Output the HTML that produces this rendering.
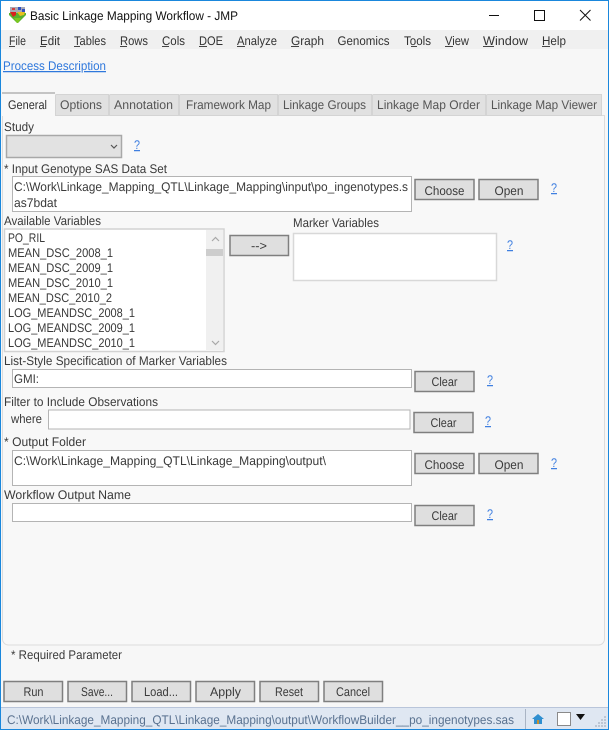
<!DOCTYPE html>
<html><head><meta charset="utf-8"><title>Basic Linkage Mapping Workflow - JMP</title>
<style>
html,body{margin:0;padding:0;background:#f7f7f7;width:609px;height:730px;overflow:hidden}
svg{display:block;position:absolute;left:0;top:0}
text{font-family:"Liberation Sans",sans-serif;font-size:12.5px;fill:#3a3a3a;white-space:pre;text-rendering:geometricPrecision}
.t{fill:#111}
.m{fill:#333}
.tab{fill:#555}
.q{fill:#3f7fe0;text-decoration:underline}
.l{fill:#2f78dc;text-decoration:underline}
.c{text-anchor:middle}
.b{fill:#dfdfdf;stroke:#7f7f7f;stroke-width:1.5}
.i{fill:#fff;stroke:#b4b4b4;stroke-width:1}
.s{fill:#5a7290}
</style></head><body>
<svg width="609" height="730" viewBox="0 0 609 730" xmlns="http://www.w3.org/2000/svg">
<rect width="609" height="730" fill="#f7f7f7"/>
<rect x="0" y="0" width="609" height="30" fill="#fff"/>
<rect x="0" y="30" width="609" height="19" fill="#f0f0f0"/>

<!-- app icon -->
<rect x="10" y="7" width="15" height="6" fill="#a9a9b4"/>
<rect x="12" y="8" width="3" height="2" fill="#d04040"/><rect x="18" y="7" width="3" height="3" fill="#3050c0"/><rect x="22" y="9" width="3" height="3" fill="#3050c0"/>
<path d="M9 13h17v2l-8 8h-1l-8-8z" fill="#58b030"/>
<path d="M10 12h6v3l-3 2z" fill="#d82020"/>
<path d="M17 12h8l-1 3-4 1z" fill="#e8c020"/>
<path d="M14 18h7l-3 5h-1z" fill="#7cc820"/>

<text class="t" x="30" y="20" textLength="208" lengthAdjust="spacingAndGlyphs">Basic Linkage Mapping Workflow - JMP</text>

<!-- window buttons -->
<rect x="489" y="15" width="10" height="1" fill="#111"/>
<rect x="534.5" y="10.5" width="10" height="10" fill="none" stroke="#111"/>
<path d="M580 10L590.500 20.500M590.500 10L580 20.500" stroke="#111" fill="none"/>

<!-- menu -->
<g class="menu">
<text class="m" x="9" y="45" textLength="17" lengthAdjust="spacingAndGlyphs">File</text>
<text class="m" x="40" y="45" textLength="20" lengthAdjust="spacingAndGlyphs">Edit</text>
<text class="m" x="74" y="45" textLength="32" lengthAdjust="spacingAndGlyphs">Tables</text>
<text class="m" x="120" y="45" textLength="28" lengthAdjust="spacingAndGlyphs">Rows</text>
<text class="m" x="162" y="45" textLength="23" lengthAdjust="spacingAndGlyphs">Cols</text>
<text class="m" x="199" y="45" textLength="24" lengthAdjust="spacingAndGlyphs">DOE</text>
<text class="m" x="237" y="45" textLength="40" lengthAdjust="spacingAndGlyphs">Analyze</text>
<text class="m" x="291" y="45" textLength="33" lengthAdjust="spacingAndGlyphs">Graph</text>
<text class="m" x="337.500" y="45" textLength="52" lengthAdjust="spacingAndGlyphs">Genomics</text>
<text class="m" x="404" y="45" textLength="27" lengthAdjust="spacingAndGlyphs">Tools</text>
<text class="m" x="445" y="45" textLength="24" lengthAdjust="spacingAndGlyphs">View</text>
<text class="m" x="483" y="45" textLength="45" lengthAdjust="spacingAndGlyphs">Window</text>
<text class="m" x="542" y="45" textLength="24" lengthAdjust="spacingAndGlyphs">Help</text>
</g>
<g fill="#444">
<rect x="9" y="46" width="6" height="1"/><rect x="40" y="46" width="6" height="1"/><rect x="74" y="46" width="6" height="1"/><rect x="120" y="46" width="7" height="1"/><rect x="162" y="46" width="7" height="1"/><rect x="199" y="46" width="8" height="1"/><rect x="237" y="46" width="8" height="1"/><rect x="291" y="46" width="8" height="1"/><rect x="411" y="46" width="6" height="1"/><rect x="445" y="46" width="8" height="1"/><rect x="483" y="46" width="11" height="1"/><rect x="542" y="46" width="8" height="1"/>
</g>

<text class="l" x="3" y="70" textLength="103" lengthAdjust="spacingAndGlyphs">Process Description</text>

<!-- tab panel -->
<path d="M2.500 115.500H604.500V639a6 6 0 0 1-6 6H8.500a6 6 0 0 1-6-6z" fill="#f8f8f8" stroke="#dcdcdc"/>
<g fill="#e1e1e1" stroke="#d4d4d4">
<path d="M55.500 115.500V95.500q0-1 1-1H108.500V115.500z"/>
<path d="M109.500 115.500V95.500q0-1 1-1H178.500V115.500z"/>
<path d="M179.500 115.500V95.500q0-1 1-1H277.500V115.500z"/>
<path d="M278.500 115.500V95.500q0-1 1-1H371.500V115.500z"/>
<path d="M372.500 115.500V95.500q0-1 1-1H485.500V115.500z"/>
<path d="M486.500 115.500V95.500q0-1 1-1H601.500V115.500z"/>
</g>
<rect x="2" y="93" width="53" height="23" fill="#f8f8f8"/>
<rect x="2" y="92" width="53" height="2" fill="#c4c4c4"/>
<text x="8" y="109" textLength="39" lengthAdjust="spacingAndGlyphs" style="fill:#333">General</text>
<text class="tab" x="60" y="109" textLength="42" lengthAdjust="spacingAndGlyphs">Options</text>
<text class="tab" x="114" y="109" textLength="59" lengthAdjust="spacingAndGlyphs">Annotation</text>
<text class="tab" x="186" y="109" textLength="85" lengthAdjust="spacingAndGlyphs">Framework Map</text>
<text class="tab" x="283" y="109" textLength="83" lengthAdjust="spacingAndGlyphs">Linkage Groups</text>
<text class="tab" x="377" y="109" textLength="103" lengthAdjust="spacingAndGlyphs">Linkage Map Order</text>
<text class="tab" x="491" y="109" textLength="106" lengthAdjust="spacingAndGlyphs">Linkage Map Viewer</text>

<!-- Study -->
<text x="4" y="131" textLength="30" lengthAdjust="spacingAndGlyphs">Study</text>
<rect x="6.500" y="135.500" width="115" height="22" fill="#e2e2e2" stroke="#a8a8a8" stroke-width="1.500"/>
<path d="M111 145l3 3 3-3" fill="none" stroke="#555" stroke-width="1.200"/>
<text class="q" x="134" y="149" textLength="6" lengthAdjust="spacingAndGlyphs">?</text>

<!-- Input -->
<text x="4" y="173" textLength="163" lengthAdjust="spacingAndGlyphs">* Input Genotype SAS Data Set</text>
<rect class="i" x="12.500" y="176.500" width="399" height="35"/>
<text x="14" y="191" textLength="394" lengthAdjust="spacingAndGlyphs">C:\Work\Linkage_Mapping_QTL\Linkage_Mapping\input\po_ingenotypes.s</text>
<text x="14" y="207" textLength="43" lengthAdjust="spacingAndGlyphs">as7bdat</text>
<rect class="b" x="415" y="179.500" width="59" height="20"/>
<text class="c" x="444.500" y="195" textLength="40" lengthAdjust="spacingAndGlyphs">Choose</text>
<rect class="b" x="479" y="179.500" width="59" height="20"/>
<text class="c" x="509" y="195" textLength="29" lengthAdjust="spacingAndGlyphs">Open</text>
<text class="q" x="551" y="192" textLength="6" lengthAdjust="spacingAndGlyphs">?</text>

<!-- Available -->
<text x="4" y="225" textLength="97" lengthAdjust="spacingAndGlyphs">Available Variables</text>
<rect x="4.500" y="229" width="219.500" height="122.500" fill="#fff" stroke="#d2d2d2" stroke-width="1.500"/>
<rect x="206" y="230" width="17" height="120" fill="#f0f0f0"/>
<rect x="206" y="249" width="17" height="7" fill="#cdcdcd"/>
<path d="M212 241l3.500-3.500 3.500 3.500M212 341l3.500 3.500 3.500-3.500" fill="none" stroke="#a8a8a8" stroke-width="1.200"/>
<text x="8" y="242" textLength="37" lengthAdjust="spacingAndGlyphs">PO_RIL</text>
<text x="8" y="257" textLength="105" lengthAdjust="spacingAndGlyphs">MEAN_DSC_2008_1</text>
<text x="8" y="272" textLength="105" lengthAdjust="spacingAndGlyphs">MEAN_DSC_2009_1</text>
<text x="8" y="287" textLength="105" lengthAdjust="spacingAndGlyphs">MEAN_DSC_2010_1</text>
<text x="8" y="302" textLength="104" lengthAdjust="spacingAndGlyphs">MEAN_DSC_2010_2</text>
<text x="8" y="317" textLength="127" lengthAdjust="spacingAndGlyphs">LOG_MEANDSC_2008_1</text>
<text x="8" y="332" textLength="127" lengthAdjust="spacingAndGlyphs">LOG_MEANDSC_2009_1</text>
<text x="8" y="347" textLength="127" lengthAdjust="spacingAndGlyphs">LOG_MEANDSC_2010_1</text>

<rect class="b" x="230" y="235.500" width="58.500" height="20"/>
<text class="c" x="259" y="250" textLength="16" lengthAdjust="spacingAndGlyphs">--&gt;</text>

<text x="293" y="227" textLength="86" lengthAdjust="spacingAndGlyphs">Marker Variables</text>
<rect x="293.500" y="233.500" width="203" height="47" fill="#fff" stroke="#d8d8d8" stroke-width="1.500"/>
<text class="q" x="507" y="249" textLength="6" lengthAdjust="spacingAndGlyphs">?</text>

<!-- List style -->
<text x="4" y="365" textLength="223" lengthAdjust="spacingAndGlyphs">List-Style Specification of Marker Variables</text>
<rect class="i" x="12.500" y="369.500" width="399" height="18"/>
<text x="14" y="383" textLength="25" lengthAdjust="spacingAndGlyphs">GMI:</text>
<rect class="b" x="415" y="371.500" width="59" height="20"/>
<text class="c" x="444.500" y="386" textLength="26" lengthAdjust="spacingAndGlyphs">Clear</text>
<text class="q" x="487" y="384" textLength="6" lengthAdjust="spacingAndGlyphs">?</text>

<!-- Filter -->
<text x="4" y="406" textLength="154" lengthAdjust="spacingAndGlyphs">Filter to Include Observations</text>
<text x="11" y="423" textLength="31" lengthAdjust="spacingAndGlyphs">where</text>
<rect class="i" x="48.500" y="410" width="361.500" height="19"/>
<rect class="b" x="414" y="412.500" width="59" height="20"/>
<text class="c" x="443.500" y="427" textLength="26" lengthAdjust="spacingAndGlyphs">Clear</text>
<text class="q" x="485" y="425" textLength="6" lengthAdjust="spacingAndGlyphs">?</text>

<!-- Output -->
<text x="4" y="446" textLength="82" lengthAdjust="spacingAndGlyphs">* Output Folder</text>
<rect class="i" x="12.500" y="450.500" width="399" height="35"/>
<text x="14" y="465" textLength="312" lengthAdjust="spacingAndGlyphs">C:\Work\Linkage_Mapping_QTL\Linkage_Mapping\output\</text>
<rect class="b" x="415" y="453.500" width="59" height="20"/>
<text class="c" x="444.500" y="469" textLength="40" lengthAdjust="spacingAndGlyphs">Choose</text>
<rect class="b" x="479" y="453.500" width="59" height="20"/>
<text class="c" x="509" y="469" textLength="29" lengthAdjust="spacingAndGlyphs">Open</text>
<text class="q" x="551" y="467" textLength="6" lengthAdjust="spacingAndGlyphs">?</text>

<!-- Workflow -->
<text x="4" y="499" textLength="127" lengthAdjust="spacingAndGlyphs">Workflow Output Name</text>
<rect class="i" x="12.500" y="503.500" width="399" height="18"/>
<rect class="b" x="415" y="505.500" width="59" height="20"/>
<text class="c" x="444.500" y="520" textLength="26" lengthAdjust="spacingAndGlyphs">Clear</text>
<text class="q" x="487" y="518" textLength="6" lengthAdjust="spacingAndGlyphs">?</text>

<text x="11" y="659" textLength="111" lengthAdjust="spacingAndGlyphs">* Required Parameter</text>

<!-- bottom buttons -->
<rect class="b" x="4" y="681.500" width="58.500" height="20"/>
<text class="c" x="33.500" y="696" textLength="20" lengthAdjust="spacingAndGlyphs">Run</text>
<rect class="b" x="68" y="681.500" width="58.500" height="20"/>
<text class="c" x="97" y="696" textLength="32" lengthAdjust="spacingAndGlyphs">Save...</text>
<rect class="b" x="132" y="681.500" width="58.500" height="20"/>
<text class="c" x="161" y="696" textLength="34" lengthAdjust="spacingAndGlyphs">Load...</text>
<rect class="b" x="196" y="681.500" width="58.500" height="20"/>
<text class="c" x="225.500" y="696" textLength="31" lengthAdjust="spacingAndGlyphs">Apply</text>
<rect class="b" x="260" y="681.500" width="58.500" height="20"/>
<text class="c" x="289" y="696" textLength="28" lengthAdjust="spacingAndGlyphs">Reset</text>
<rect class="b" x="324" y="681.500" width="58.500" height="20"/>
<text class="c" x="353" y="696" textLength="34" lengthAdjust="spacingAndGlyphs">Cancel</text>

<!-- status bar -->
<rect x="0" y="707" width="609" height="23" fill="#dfe7f2"/>
<rect x="0" y="707" width="609" height="1" fill="#b9c5da"/>
<text class="s" x="7" y="724" textLength="507" lengthAdjust="spacingAndGlyphs">C:\Work\Linkage_Mapping_QTL\Linkage_Mapping\output\WorkflowBuilder__po_ingenotypes.sas</text>
<rect x="525" y="709" width="1" height="20" fill="#a9b4c4"/>
<path d="M538 714l-6 5h2v5h8v-5h2z" fill="#2f8fd0"/>
<rect x="537" y="720" width="2" height="4" fill="#c89030"/>
<rect x="557.500" y="712.500" width="13" height="13" fill="#fff" stroke="#8a8a8a"/>
<path d="M576 714h9l-4.500 6z" fill="#111"/>
<g fill="#bcc6d4">
<rect x="604" y="716" width="2" height="2"/><rect x="601" y="719" width="2" height="2"/><rect x="604" y="719" width="2" height="2"/><rect x="598" y="722" width="2" height="2"/><rect x="601" y="722" width="2" height="2"/><rect x="604" y="722" width="2" height="2"/><rect x="595" y="725" width="2" height="2"/><rect x="598" y="725" width="2" height="2"/><rect x="601" y="725" width="2" height="2"/><rect x="604" y="725" width="2" height="2"/>
</g>

<!-- window border -->
<rect x="0" y="0" width="609" height="1" fill="#1a87dc"/>
<rect x="0" y="0" width="1" height="730" fill="#1a87dc"/>
<rect x="608" y="0" width="1" height="730" fill="#1a87dc"/>
<rect x="0" y="729" width="609" height="1" fill="#1a87dc"/>
</svg>
</body></html>
